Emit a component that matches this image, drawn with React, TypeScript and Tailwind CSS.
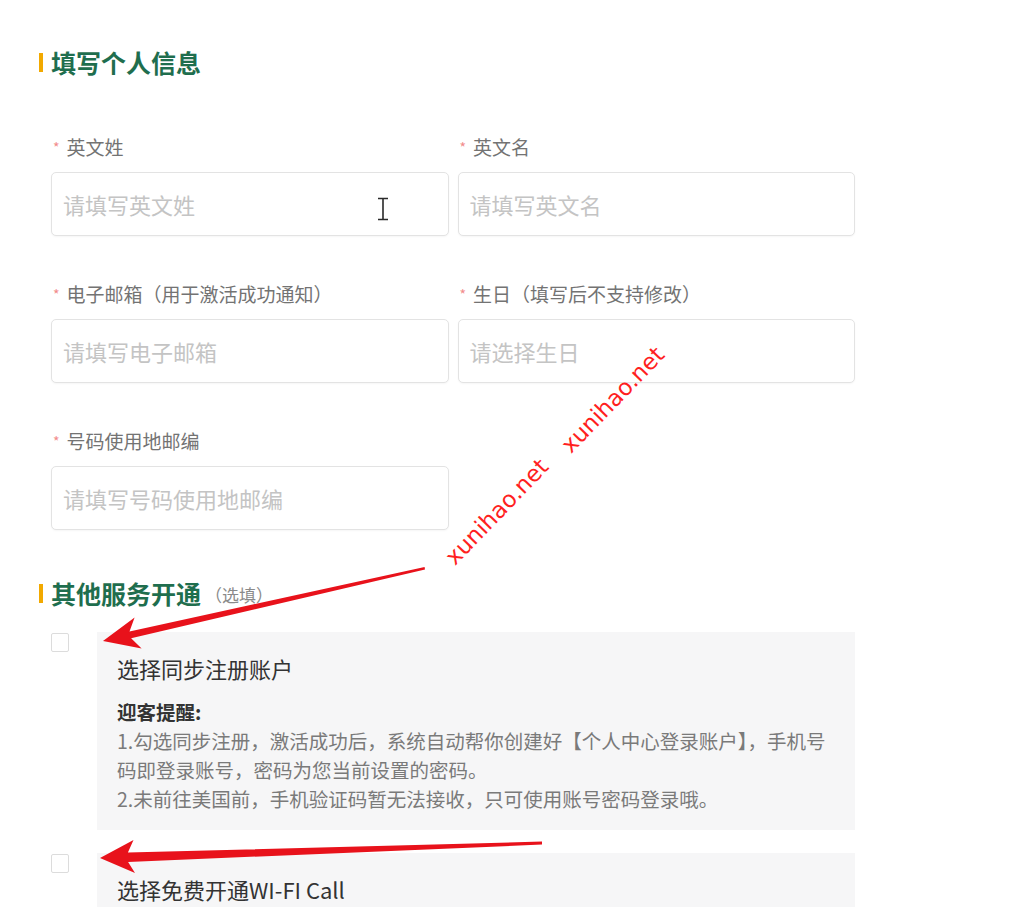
import React from "react";

const FONT = { fontFamily: '"Noto Sans CJK SC", "Noto Sans", sans-serif' };

function SectionTitle({ text, extra }: { text: string; extra?: string }) {
  return (
    <div className="flex h-8 items-center">
      <span className="mr-[8px] h-[19px] w-[4px] bg-[#f2a900]" />
      <span className="text-[25px] font-bold leading-8 text-[#1f6e4e]">{text}</span>
      {extra && <span className="ml-[4px] mt-[3px] text-[17px] text-[#8a8a8a]">{extra}</span>}
    </div>
  );
}

function Field({ label, placeholder, cursor }: { label: string; placeholder: string; cursor?: boolean }) {
  return (
    <div className="flex flex-col">
      <div className="flex h-6 items-center text-[19px] leading-6 text-[#737373]">
        <span className="ml-[2px] mr-[7px] text-[14px] text-[#f28b8b]">*</span>
        {label}
      </div>
      <div className="relative mt-[13px] flex h-[64px] items-center rounded-[5px] border border-[#e3e3e3] bg-white px-[11px] shadow-[0_1px_2px_rgba(0,0,0,0.04)]">
        <span className="text-[22px] text-[#c4c4c4]">{placeholder}</span>
        {cursor && (
          <svg className="absolute left-[324px] top-[24px]" width="14" height="24" viewBox="0 0 14 24">
            <path d="M2 1.5h10M2 22.5h10M7 1.5v21" stroke="#2a2a2a" strokeWidth="1.6" fill="none" />
          </svg>
        )}
      </div>
    </div>
  );
}

function Option({ title, children }: { title: string; children?: React.ReactNode }) {
  return (
    <div className="ml-[12px] flex items-start">
      <span className="mt-px h-[19px] w-[18px] shrink-0 rounded-[2px] border border-[#dcdcdc] bg-white" />
      <div className="ml-[28px] w-[758px] bg-[#f6f6f7] pb-[17px] pl-[20px] pr-[24px] pt-[22px]">
        <div className="text-[22px] leading-7 text-[#333]">{title}</div>
        {children}
      </div>
    </div>
  );
}

export default function App() {
  return (
    <div className="relative h-[907px] w-full overflow-hidden bg-white" style={FONT}>
      <div className="pl-[39px] pt-[46px]">
        <SectionTitle text="填写个人信息" />
        <div className="ml-[12px] mt-[57px] grid w-[804px] grid-cols-2 gap-x-[9px] gap-y-[46px]">
          <Field label="英文姓" placeholder="请填写英文姓" cursor />
          <Field label="英文名" placeholder="请填写英文名" />
          <Field label="电子邮箱（用于激活成功通知）" placeholder="请填写电子邮箱" />
          <Field label="生日（填写后不支持修改）" placeholder="请选择生日" />
          <Field label="号码使用地邮编" placeholder="请填写号码使用地邮编" />
        </div>
        <div className="mt-[47px]">
          <SectionTitle text="其他服务开通" extra="（选填）" />
        </div>
        <div className="mt-[23px] flex flex-col gap-[23px]">
          <Option title="选择同步注册账户">
            <div className="mt-[15px] text-[19.5px] leading-[29px] text-[#7a7a7a]">
              <div className="font-bold text-[#333]">迎客提醒:</div>
              <div>1.勾选同步注册，激活成功后，系统自动帮你创建好【个人中心登录账户】，手机号码即登录账号，密码为您当前设置的密码。</div>
              <div>2.未前往美国前，手机验证码暂无法接收，只可使用账号密码登录哦。</div>
            </div>
          </Option>
          <Option title="选择免费开通WI-FI Call">
            <div className="h-[60px]" />
          </Option>
        </div>
      </div>

      <svg className="pointer-events-none absolute left-0 top-0" width="1024" height="907" viewBox="0 0 1024 907">
        <polygon
          points="424.6,567 129.5,631.4 134.6,617.4 103,641 141.6,648.6 131.1,638.2 425,569.4"
          fill="#e8121b"
        />
        <polygon
          points="542,841.6 127.9,852.5 133.5,840 100,858 135,873 128.1,862 542,844.6"
          fill="#e8121b"
        />
      </svg>

      <div
        className="pointer-events-none absolute left-[497px] top-[512px] -translate-x-1/2 -translate-y-1/2 -rotate-[46deg] whitespace-nowrap text-[23px] leading-none text-[#ff1f1f]"
        style={{ fontFamily: '"DejaVu Sans", sans-serif' }}
      >
        xunihao.net
      </div>
      <div
        className="pointer-events-none absolute left-[613px] top-[400px] -translate-x-1/2 -translate-y-1/2 -rotate-[46deg] whitespace-nowrap text-[23px] leading-none text-[#ff1f1f]"
        style={{ fontFamily: '"DejaVu Sans", sans-serif' }}
      >
        xunihao.net
      </div>
    </div>
  );
}
